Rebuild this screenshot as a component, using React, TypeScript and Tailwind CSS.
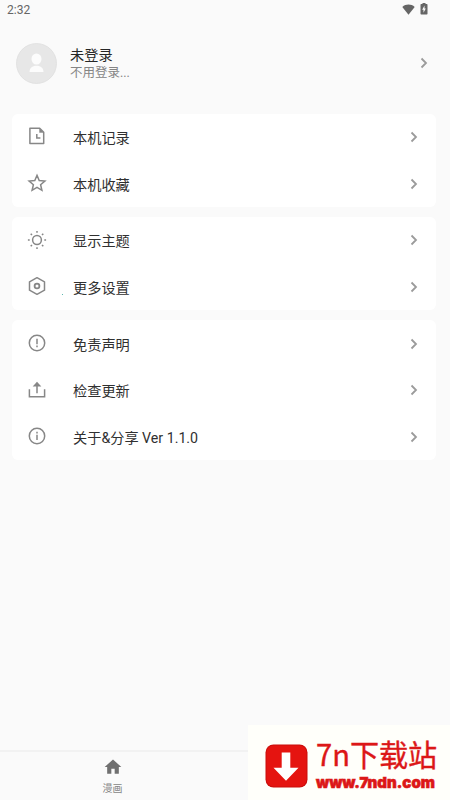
import type { ReactNode } from "react";

function Icon({ children, size = 20 }: { children: ReactNode; size?: number }) {
  return (
    <svg
      width={size}
      height={size}
      viewBox="0 0 20 20"
      fill="none"
      stroke="currentColor"
      strokeWidth={1.5}
      aria-hidden
    >
      {children}
    </svg>
  );
}

const icons = {
  history: (
    <Icon>
      <path d="M2.9 2.2h9.8l4 4v11.3H2.9z" strokeLinejoin="round" />
      <path d="M12.5 2.4v4.1h4z" fill="currentColor" strokeWidth={0.4} />
      <path d="M9.8 8v4.1h3.6" />
    </Icon>
  ),
  star: (
    <Icon>
      <path d="M10 2.3l2.2 5.2 5.7.5-4.3 3.7 1.3 5.6-4.9-3-4.9 3 1.3-5.6L2.1 8l5.7-.5z" />
    </Icon>
  ),
  sun: (
    <Icon>
      <circle cx="10" cy="10" r="4.4" />
      <path d="M10 .9v1.8M10 17.3v1.8M.9 10h1.8M17.3 10h1.8M3.7 3.7L5 5M15 15l1.3 1.3M3.7 16.3L5 15M15 5l1.3-1.3" />
    </Icon>
  ),
  settings: (
    <Icon>
      <path d="M10 1.7l7.5 4.1v8.4L10 18.3l-7.5-4.1V5.8z" strokeLinejoin="round" />
      <circle cx="10" cy="10" r="2.4" strokeWidth={1.8} />
    </Icon>
  ),
  alert: (
    <Icon>
      <circle cx="10" cy="10" r="7.7" />
      <path d="M10 5.8v5.4M10 12.6v1.7" />
    </Icon>
  ),
  upload: (
    <Icon>
      <path d="M2.4 9.3v7.4h15.2V9.3M10 13.3V5" />
      <path d="M10 1.8L5.7 6.4h8.6z" fill="currentColor" stroke="none" />
    </Icon>
  ),
  info: (
    <Icon>
      <circle cx="10" cy="10" r="7.7" />
      <path d="M10 5.8v1.6M10 8.8v5.3" />
    </Icon>
  ),
};

const groups: { icon: keyof typeof icons; label: string; dot?: boolean }[][] = [
  [
    { icon: "history", label: "本机记录" },
    { icon: "star", label: "本机收藏" },
  ],
  [
    { icon: "sun", label: "显示主题" },
    { icon: "settings", label: "更多设置", dot: true },
  ],
  [
    { icon: "alert", label: "免责声明" },
    { icon: "upload", label: "检查更新" },
    { icon: "info", label: "关于&分享 Ver 1.1.0" },
  ],
];

function Chevron() {
  return (
    <svg width="8" height="12" viewBox="0 0 8 12" fill="none" stroke="#9b9b9b" strokeWidth="1.8" aria-hidden>
      <path d="M1.5 1.5L6 6l-4.5 4.5" />
    </svg>
  );
}

function StatusBar() {
  return (
    <div className="flex h-5 items-center justify-between pl-[7px] pr-[22px] text-[#656565]">
      <span className="text-[12px] leading-5">2:32</span>
      <div className="flex items-center gap-[5px] pb-[2px]">
        <svg width="13" height="11" viewBox="0 0 13 11" fill="currentColor" aria-hidden>
          <path d="M.3 3C3.8-.2 9.2-.2 12.7 3L6.5 10.7z" />
        </svg>
        <svg width="8" height="12" viewBox="0 0 8 12" aria-hidden>
          <path d="M2.5 0h3v1h1.3q.7 0 .7.7v9q0 .8-.7.8H1.2q-.7 0-.7-.8v-9q0-.7.7-.7h1.3z" fill="currentColor" />
          <path d="M4.5 2.5L2.2 6.8h1.3v3l2.3-4.3H4.5z" fill="#fafafa" />
        </svg>
      </div>
    </div>
  );
}

function Profile() {
  return (
    <div className="flex h-[86px] items-center pl-4 pr-[22px]">
      <svg width="41" height="41" viewBox="0 0 41 41" aria-hidden>
        <circle cx="20.5" cy="20.5" r="20" fill="#e7e7e7" stroke="#dddddd" strokeWidth=".7" />
        <ellipse cx="20.5" cy="16" rx="5" ry="5.6" fill="#fcfcfc" />
        <path d="M13.5 29c0-4 2.6-6.3 7-6.3s7 2.3 7 6.3z" fill="#fcfcfc" />
      </svg>
      <div className="ml-[13px] flex-1">
        <div className="text-[14.2px] leading-[18px] text-[#262626]">未登录</div>
        <div className="text-[12.5px] leading-[17px] text-[#858585]">不用登录...</div>
      </div>
      <Chevron />
    </div>
  );
}

function Watermark() {
  return (
    <div className="absolute bottom-0 right-0 flex h-[75px] w-[202px] bg-[#fffffa] pl-[17px] pt-[12px] text-[#dc1717]">
      <svg className="mt-[7px] shrink-0" width="43" height="44" viewBox="0 0 43 44" aria-hidden>
        <rect x=".5" y=".5" width="42" height="43" rx="8" fill="#c90e0b" />
        <rect x="1.5" y="1.5" width="40" height="41" rx="7" fill="#e51410" />
        <path d="M16.7 8.5h8.6v15.3h8.2L21 36.8 8.5 23.8h8.2z" fill="#fff" />
      </svg>
      <div className="ml-2 whitespace-nowrap">
        <div className="origin-left scale-x-[.97] font-['Noto_Sans_CJK_SC',sans-serif] text-[30px] leading-[32px] [-webkit-text-stroke:0.4px_#dc1717]">
          7n下载站
        </div>
        <div className="mt-[5px] font-[Inter,sans-serif] text-[15px] leading-[18px] font-black [-webkit-text-stroke:0.6px_#dc1717]">
          www.7ndn.com
        </div>
      </div>
    </div>
  );
}

export default function App() {
  return (
    <div className="relative flex h-[800px] w-[450px] flex-col overflow-hidden bg-[#fafafa] font-[Roboto,'Noto_Sans_CJK_SC',sans-serif]">
      <StatusBar />
      <Profile />
      <main className="flex-1 space-y-[10px] pl-[12px] pr-[14px] pt-[7.5px]">
        {groups.map((rows) => (
          <section key={rows[0].label} className="rounded-md bg-white">
            {rows.map((row) => (
              <div key={row.label} className="flex h-[46.7px] items-center pl-[14.5px] pr-[18.5px]">
                <span className="relative w-[46.5px] pb-px text-[#878787]">
                  {icons[row.icon]}
                  {row.dot && <i className="absolute bottom-[2px] left-[35px] size-px bg-[#5cb8b0]" />}
                </span>
                <span className="flex-1 pt-[2px] text-[14.2px] leading-5 text-[#303030]">{row.label}</span>
                <Chevron />
              </div>
            ))}
          </section>
        ))}
      </main>
      <nav className="flex h-[50px] border-t-2 border-[#f2f2f2]">
        <div className="flex w-1/2 flex-col items-center pt-[5px] text-[#707070]">
          <svg width="20" height="20" viewBox="0 0 24 24" fill="currentColor" aria-hidden>
            <path d="M10 20v-6h4v6h5v-8h3L12 3 2 12h3v8z" />
          </svg>
          <span className="mt-[5px] text-[10px] leading-[14px] text-[#858585]">漫画</span>
        </div>
        <div className="w-1/2" />
      </nav>
      <Watermark />
    </div>
  );
}
